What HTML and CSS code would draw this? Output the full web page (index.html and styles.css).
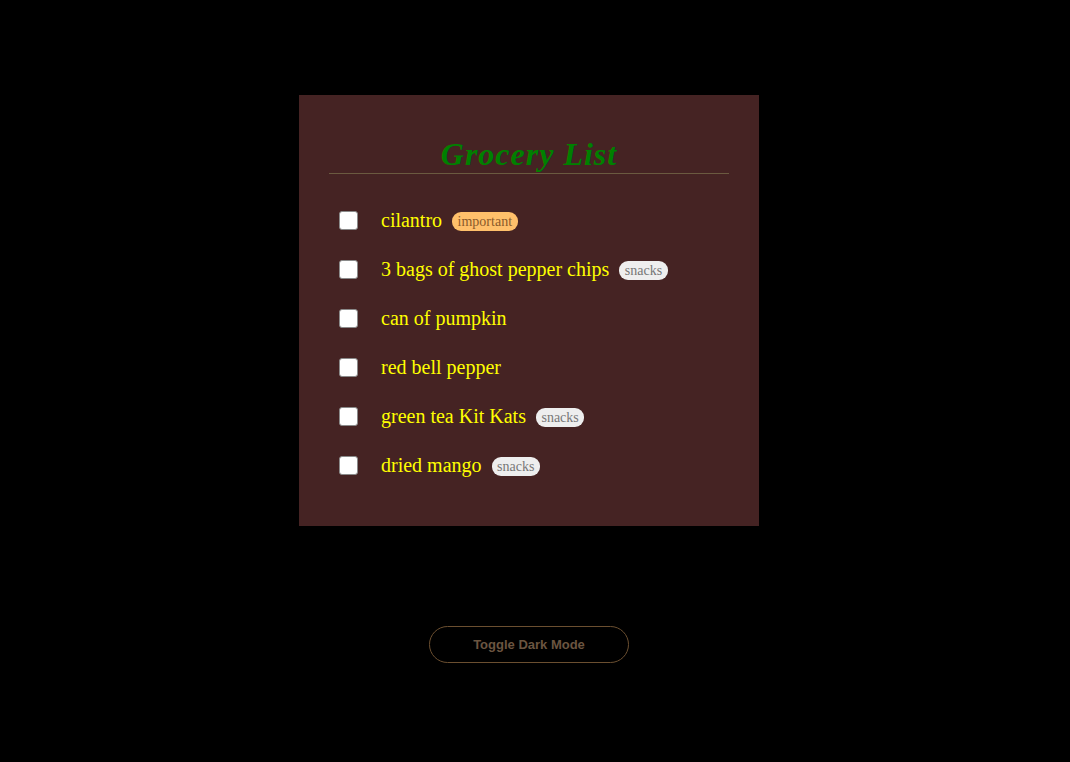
FILE: index.html
```html
<!DOCTYPE html>
<html>
<head>
<meta charset="utf-8">
<link rel="stylesheet" href="styles.css">
</head>
<body>
<div class="page">
  <div class="panel">
    <h1 class="title">Grocery List</h1>
    <ul class="list">
      <li class="item"><span class="box"></span><span class="label">cilantro</span><span class="tag tag-important">important</span></li>
      <li class="item"><span class="box"></span><span class="label">3 bags of ghost pepper chips</span><span class="tag">snacks</span></li>
      <li class="item"><span class="box"></span><span class="label">can of pumpkin</span></li>
      <li class="item"><span class="box"></span><span class="label">red bell pepper</span></li>
      <li class="item"><span class="box"></span><span class="label">green tea Kit Kats</span><span class="tag">snacks</span></li>
      <li class="item"><span class="box"></span><span class="label">dried mango</span><span class="tag">snacks</span></li>
    </ul>
  </div>
  <button class="toggle">Toggle Dark Mode</button>
</div>
</body>
</html>
```
FILE: styles.css
```css
html, body {
  margin: 0;
  padding: 0;
  background: #000;
}
.page {
  width: 1058px;
  display: flex;
  flex-direction: column;
  align-items: center;
  padding-top: 95px;
}
.panel {
  width: 460px;
  box-sizing: border-box;
  background: #452323;
  padding: 40px 30px 36px;
}
.title {
  margin: 0;
  font-family: "Liberation Serif", "Times New Roman", serif;
  font-style: italic;
  font-weight: bold;
  font-size: 32px;
  line-height: 38px;
  letter-spacing: 1px;
  color: #008000;
  text-align: center;
  border-bottom: 1px solid #6b5a40;
}
.list {
  list-style: none;
  margin: 22px 0 0;
  padding: 0 0 0 10px;
}
.item {
  display: flex;
  align-items: center;
  height: 49px;
}
.box {
  width: 17px;
  height: 17px;
  background: #fff;
  border: 1px solid #8a8a8a;
  border-radius: 3px;
  flex: none;
  margin-right: 23px;
}
.label {
  font-family: "Liberation Serif", "Times New Roman", serif;
  font-size: 20px;
  color: #ffff00;
}
.tag {
  margin-left: 10px;
  margin-top: 2px;
  font-family: "Liberation Serif", "Times New Roman", serif;
  font-size: 14px;
  line-height: 19px;
  padding: 0 5.5px;
  border-radius: 9px;
  background: #eeeeee;
  color: #777;
}
.tag-important {
  background: #ffc06b;
  color: #8a5a2a;
}
.toggle {
  margin-top: 100px;
  width: 200px;
  height: 37px;
  background: transparent;
  border: 1px solid #6b4f30;
  border-radius: 19px;
  font-family: "Liberation Sans", Arial, sans-serif;
  font-weight: bold;
  font-size: 13px;
  color: #6b5540;
  cursor: pointer;
}
```
